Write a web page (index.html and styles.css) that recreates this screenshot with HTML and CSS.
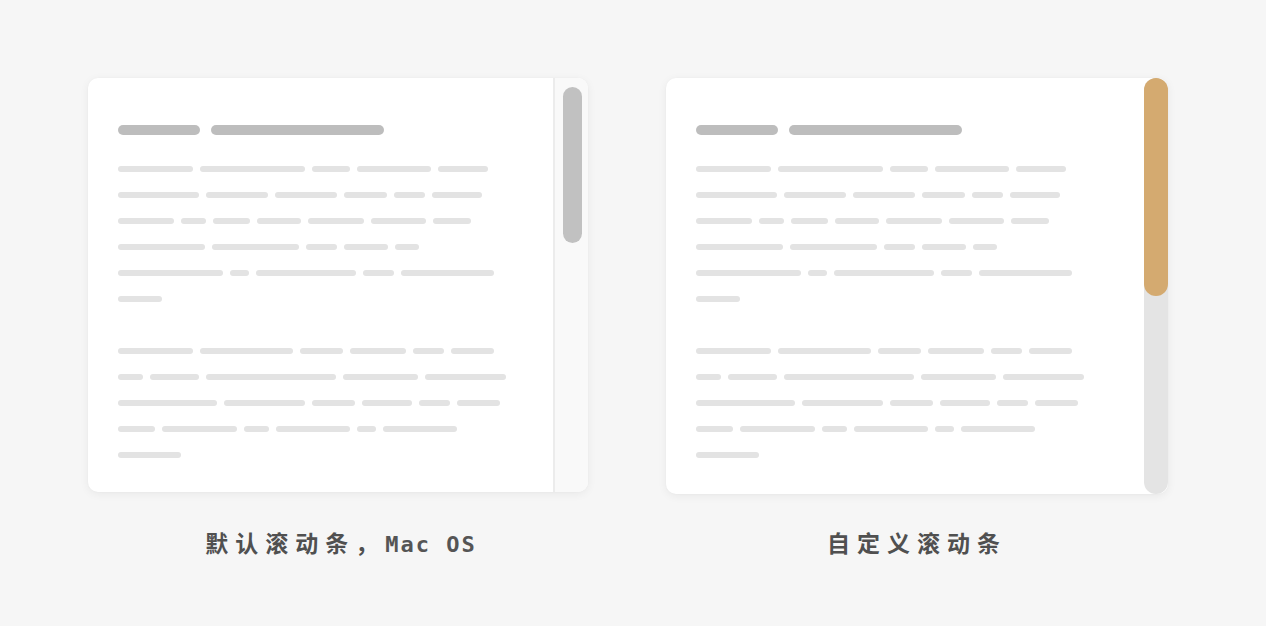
FILE: index.html
```html
<!DOCTYPE html>
<html lang="zh">
<head>
<meta charset="utf-8">
<title>滚动条</title>
<link rel="stylesheet" href="styles.css">
</head>
<body>
<main class="stage">
  <section class="demo">
    <div class="card card-mac">
      <div class="content">
        <div class="title-row"><span class="tbar" style="width:82px"></span><span class="tbar" style="width:173px"></span></div>
        <div class="para">
          <div class="row"><span class="bar" style="width:75px"></span><span class="bar" style="width:105px"></span><span class="bar" style="width:38px"></span><span class="bar" style="width:74px"></span><span class="bar" style="width:50px"></span></div>
          <div class="row"><span class="bar" style="width:81px"></span><span class="bar" style="width:62px"></span><span class="bar" style="width:62px"></span><span class="bar" style="width:43px"></span><span class="bar" style="width:31px"></span><span class="bar" style="width:50px"></span></div>
          <div class="row"><span class="bar" style="width:56px"></span><span class="bar" style="width:25px"></span><span class="bar" style="width:37px"></span><span class="bar" style="width:44px"></span><span class="bar" style="width:56px"></span><span class="bar" style="width:55px"></span><span class="bar" style="width:38px"></span></div>
          <div class="row"><span class="bar" style="width:87px"></span><span class="bar" style="width:87px"></span><span class="bar" style="width:31px"></span><span class="bar" style="width:44px"></span><span class="bar" style="width:24px"></span></div>
          <div class="row"><span class="bar" style="width:105px"></span><span class="bar" style="width:19px"></span><span class="bar" style="width:100px"></span><span class="bar" style="width:31px"></span><span class="bar" style="width:93px"></span></div>
          <div class="row"><span class="bar" style="width:44px"></span></div>
        </div>
        <div class="para">
          <div class="row"><span class="bar" style="width:75px"></span><span class="bar" style="width:93px"></span><span class="bar" style="width:43px"></span><span class="bar" style="width:56px"></span><span class="bar" style="width:31px"></span><span class="bar" style="width:43px"></span></div>
          <div class="row"><span class="bar" style="width:25px"></span><span class="bar" style="width:49px"></span><span class="bar" style="width:130px"></span><span class="bar" style="width:75px"></span><span class="bar" style="width:81px"></span></div>
          <div class="row"><span class="bar" style="width:99px"></span><span class="bar" style="width:81px"></span><span class="bar" style="width:43px"></span><span class="bar" style="width:50px"></span><span class="bar" style="width:31px"></span><span class="bar" style="width:43px"></span></div>
          <div class="row"><span class="bar" style="width:37px"></span><span class="bar" style="width:75px"></span><span class="bar" style="width:25px"></span><span class="bar" style="width:74px"></span><span class="bar" style="width:19px"></span><span class="bar" style="width:74px"></span></div>
          <div class="row"><span class="bar" style="width:63px"></span></div>
        </div>
      </div>
      <div class="track track-mac"><div class="thumb thumb-mac"></div></div>
    </div>
    <p class="caption caption-mac">默认滚动条，<span class="latin">Mac OS</span></p>
  </section>

  <section class="demo">
    <div class="card card-custom">
      <div class="content">
        <div class="title-row"><span class="tbar" style="width:82px"></span><span class="tbar" style="width:173px"></span></div>
        <div class="para">
          <div class="row"><span class="bar" style="width:75px"></span><span class="bar" style="width:105px"></span><span class="bar" style="width:38px"></span><span class="bar" style="width:74px"></span><span class="bar" style="width:50px"></span></div>
          <div class="row"><span class="bar" style="width:81px"></span><span class="bar" style="width:62px"></span><span class="bar" style="width:62px"></span><span class="bar" style="width:43px"></span><span class="bar" style="width:31px"></span><span class="bar" style="width:50px"></span></div>
          <div class="row"><span class="bar" style="width:56px"></span><span class="bar" style="width:25px"></span><span class="bar" style="width:37px"></span><span class="bar" style="width:44px"></span><span class="bar" style="width:56px"></span><span class="bar" style="width:55px"></span><span class="bar" style="width:38px"></span></div>
          <div class="row"><span class="bar" style="width:87px"></span><span class="bar" style="width:87px"></span><span class="bar" style="width:31px"></span><span class="bar" style="width:44px"></span><span class="bar" style="width:24px"></span></div>
          <div class="row"><span class="bar" style="width:105px"></span><span class="bar" style="width:19px"></span><span class="bar" style="width:100px"></span><span class="bar" style="width:31px"></span><span class="bar" style="width:93px"></span></div>
          <div class="row"><span class="bar" style="width:44px"></span></div>
        </div>
        <div class="para">
          <div class="row"><span class="bar" style="width:75px"></span><span class="bar" style="width:93px"></span><span class="bar" style="width:43px"></span><span class="bar" style="width:56px"></span><span class="bar" style="width:31px"></span><span class="bar" style="width:43px"></span></div>
          <div class="row"><span class="bar" style="width:25px"></span><span class="bar" style="width:49px"></span><span class="bar" style="width:130px"></span><span class="bar" style="width:75px"></span><span class="bar" style="width:81px"></span></div>
          <div class="row"><span class="bar" style="width:99px"></span><span class="bar" style="width:81px"></span><span class="bar" style="width:43px"></span><span class="bar" style="width:50px"></span><span class="bar" style="width:31px"></span><span class="bar" style="width:43px"></span></div>
          <div class="row"><span class="bar" style="width:37px"></span><span class="bar" style="width:75px"></span><span class="bar" style="width:25px"></span><span class="bar" style="width:74px"></span><span class="bar" style="width:19px"></span><span class="bar" style="width:74px"></span></div>
          <div class="row"><span class="bar" style="width:63px"></span></div>
        </div>
      </div>
      <div class="track track-custom"><div class="thumb thumb-custom"></div></div>
    </div>
    <p class="caption">自定义滚动条</p>
  </section>
</main>
</body>
</html>
```

FILE: styles.css
```css
html, body {
  margin: 0;
  padding: 0;
}

body {
  background: #f6f6f6;
  width: 1266px;
  height: 626px;
  overflow: hidden;
  font-family: "Liberation Sans", "Noto Sans CJK SC", sans-serif;
}

.stage {
  display: flex;
  align-items: flex-start;
  gap: 78px;
  padding: 78px 0 0 88px;
}

.demo {
  display: flex;
  flex-direction: column;
  align-items: center;
}

.card {
  display: flex;
  background: #ffffff;
  border-radius: 10px;
  box-shadow: 0 2px 10px rgba(0, 0, 0, 0.06), 0 0 2px rgba(0, 0, 0, 0.03);
}

.card-mac {
  width: 500px;
  height: 414px;
  margin-bottom: 35px;
}

.card-custom {
  width: 502px;
  height: 416px;
  margin-bottom: 33px;
}

.content {
  flex: 1;
  display: flex;
  flex-direction: column;
  padding: 47px 0 0 30px;
}

.title-row {
  display: flex;
  gap: 11px;
  margin-bottom: 31px;
}

.tbar {
  display: block;
  height: 10px;
  border-radius: 5px;
  background: #bdbdbd;
}

.para {
  display: flex;
  flex-direction: column;
  gap: 20px;
}

.para + .para {
  margin-top: 46px;
}

.row {
  display: flex;
  gap: 7px;
}

.bar {
  display: block;
  height: 6px;
  border-radius: 3px;
  background: #e3e3e3;
}

.track-mac {
  box-sizing: border-box;
  width: 35px;
  border-left: 2px solid #ececec;
  background: #f9f9f9;
  border-radius: 0 10px 10px 0;
  padding: 9px 6px 0 8px;
}

.thumb-mac {
  width: 19px;
  height: 156px;
  border-radius: 10px;
  background: #c1c1c1;
}

.track-custom {
  width: 24px;
  background: #e4e4e4;
  border-radius: 12px;
}

.thumb-custom {
  width: 24px;
  height: 218px;
  border-radius: 12px;
  background: #d4aa70;
}

.caption {
  margin: 0;
  font-family: "Noto Sans CJK SC", sans-serif;
  font-size: 23px;
  line-height: 30px;
  font-weight: 600;
  letter-spacing: 7px;
  color: #505050;
}

.caption-mac {
  padding-left: 6px;
}

.caption .latin {
  font-family: "DejaVu Sans Mono", "Liberation Mono", monospace;
  font-weight: 700;
  font-size: 22px;
  letter-spacing: 2px;
  color: #555555;
}
```
